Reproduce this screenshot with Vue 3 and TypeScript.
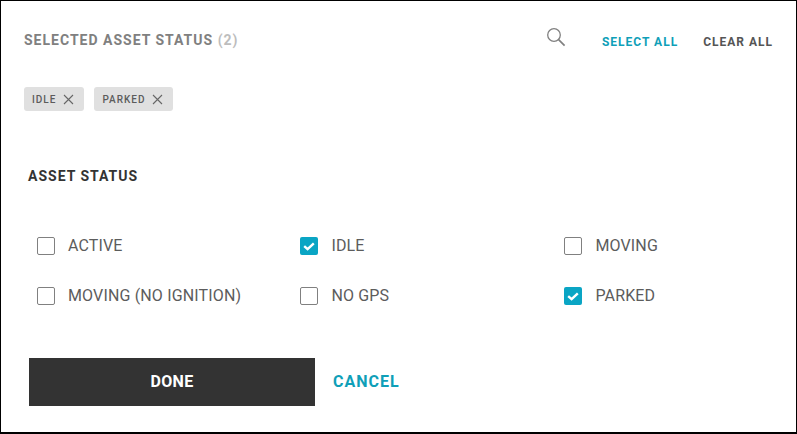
<script setup lang="ts">
interface StatusOption {
  label: string
  checked: boolean
}

const options: StatusOption[] = [
  { label: 'ACTIVE', checked: false },
  { label: 'IDLE', checked: true },
  { label: 'MOVING', checked: false },
  { label: 'MOVING (NO IGNITION)', checked: false },
  { label: 'NO GPS', checked: false },
  { label: 'PARKED', checked: true }
]

const selected = options.filter((o) => o.checked)
</script>

<template>
  <div class="dialog">
    <header class="top">
      <h2 class="title">SELECTED ASSET STATUS <span class="count">({{ selected.length }})</span></h2>
      <svg class="search" width="20" height="20" viewBox="0 0 20 20" fill="none" stroke="#808080">
        <circle cx="8" cy="8" r="6.3" stroke-width="1.3" />
        <path d="M12.6 12.6L18.6 18.6" stroke-width="1.6" />
      </svg>
      <a class="link select">SELECT ALL</a>
      <a class="link clear">CLEAR ALL</a>
    </header>

    <div class="chips">
      <span v-for="s in selected" :key="s.label" class="chip">
        {{ s.label }}
        <svg width="11" height="11" viewBox="0 0 11 11" stroke="#666" stroke-width="1.1">
          <path d="M1 1L10 10M10 1L1 10" />
        </svg>
      </span>
    </div>

    <h3 class="section">ASSET STATUS</h3>

    <div class="options">
      <label v-for="o in options" :key="o.label" class="option">
        <span class="box" :class="{ on: o.checked }">
          <svg v-if="o.checked" width="18" height="18" viewBox="0 0 18 18" fill="none" stroke="#fff" stroke-width="2.4">
            <path d="M4.2 9.2L7.6 12.2L13.8 6.4" />
          </svg>
        </span>
        <span class="label">{{ o.label }}</span>
      </label>
    </div>

    <div class="actions">
      <button class="done">DONE</button>
      <a class="cancel">CANCEL</a>
    </div>
  </div>
</template>

<style>
body {
  margin: 0;
  background: #fff;
}
</style>

<style scoped>
.dialog {
  box-sizing: border-box;
  width: 797px;
  height: 434px;
  border: 1px solid #000;
  border-bottom-width: 2px;
  padding: 0 23px;
  background: #fff;
  font-family: Roboto, "Liberation Sans", sans-serif;
  color: #555;
}

.top {
  display: flex;
  align-items: center;
  height: 78px;
}

.title {
  margin: 0 auto 0 0;
  font-size: 14px;
  font-weight: 700;
  letter-spacing: 1px;
  color: #808080;
}

.count {
  color: #bdbdbd;
}

.search {
  margin: -6px 36px 0 0;
}

.link {
  margin-top: 3px;
  font-size: 12px;
  font-weight: 700;
  letter-spacing: 1px;
}

.select {
  color: #0f9fb8;
  margin-right: 25px;
}

.clear {
  color: #555;
}

.chips {
  display: flex;
  gap: 10px;
  margin-top: 8px;
}

.chip {
  display: flex;
  align-items: center;
  gap: 6.5px;
  height: 24px;
  padding: 0 10.5px 0 8px;
  border-radius: 3px;
  background: #e0e0e0;
  font-size: 10px;
  font-weight: 500;
  letter-spacing: 1px;
  color: #5c5c5c;
}

.section {
  margin: 57px 0 0 4px;
  font-size: 14px;
  line-height: 16px;
  font-weight: 700;
  letter-spacing: 1px;
  color: #333;
}

.options {
  display: grid;
  grid-template-columns: 263.4px 264px 263px;
  grid-auto-rows: 50px;
  margin: 37px 0 0 13px;
}

.option {
  display: flex;
  align-items: center;
  gap: 13px;
  font-size: 16px;
  letter-spacing: 0.15px;
  color: #5c5c5c;
}

.label {
  margin-top: -2px;
}

.box {
  box-sizing: border-box;
  width: 18px;
  height: 18px;
  border: 1px solid #808080;
  border-radius: 2px;
}

.box.on {
  border: 0;
  background: #0aa5c4;
}

.box svg {
  display: block;
}

.actions {
  display: flex;
  align-items: center;
  gap: 18px;
  margin: 37px 0 0 5px;
}

.done {
  width: 286px;
  height: 48px;
  padding-bottom: 2px;
  border: 0;
  background: #333;
  color: #fff;
  font-family: inherit;
  font-size: 16px;
  font-weight: 700;
  letter-spacing: 0.3px;
}

.cancel {
  margin-top: -2px;
  font-size: 16px;
  font-weight: 700;
  letter-spacing: 1px;
  color: #0f9fb8;
}
</style>
